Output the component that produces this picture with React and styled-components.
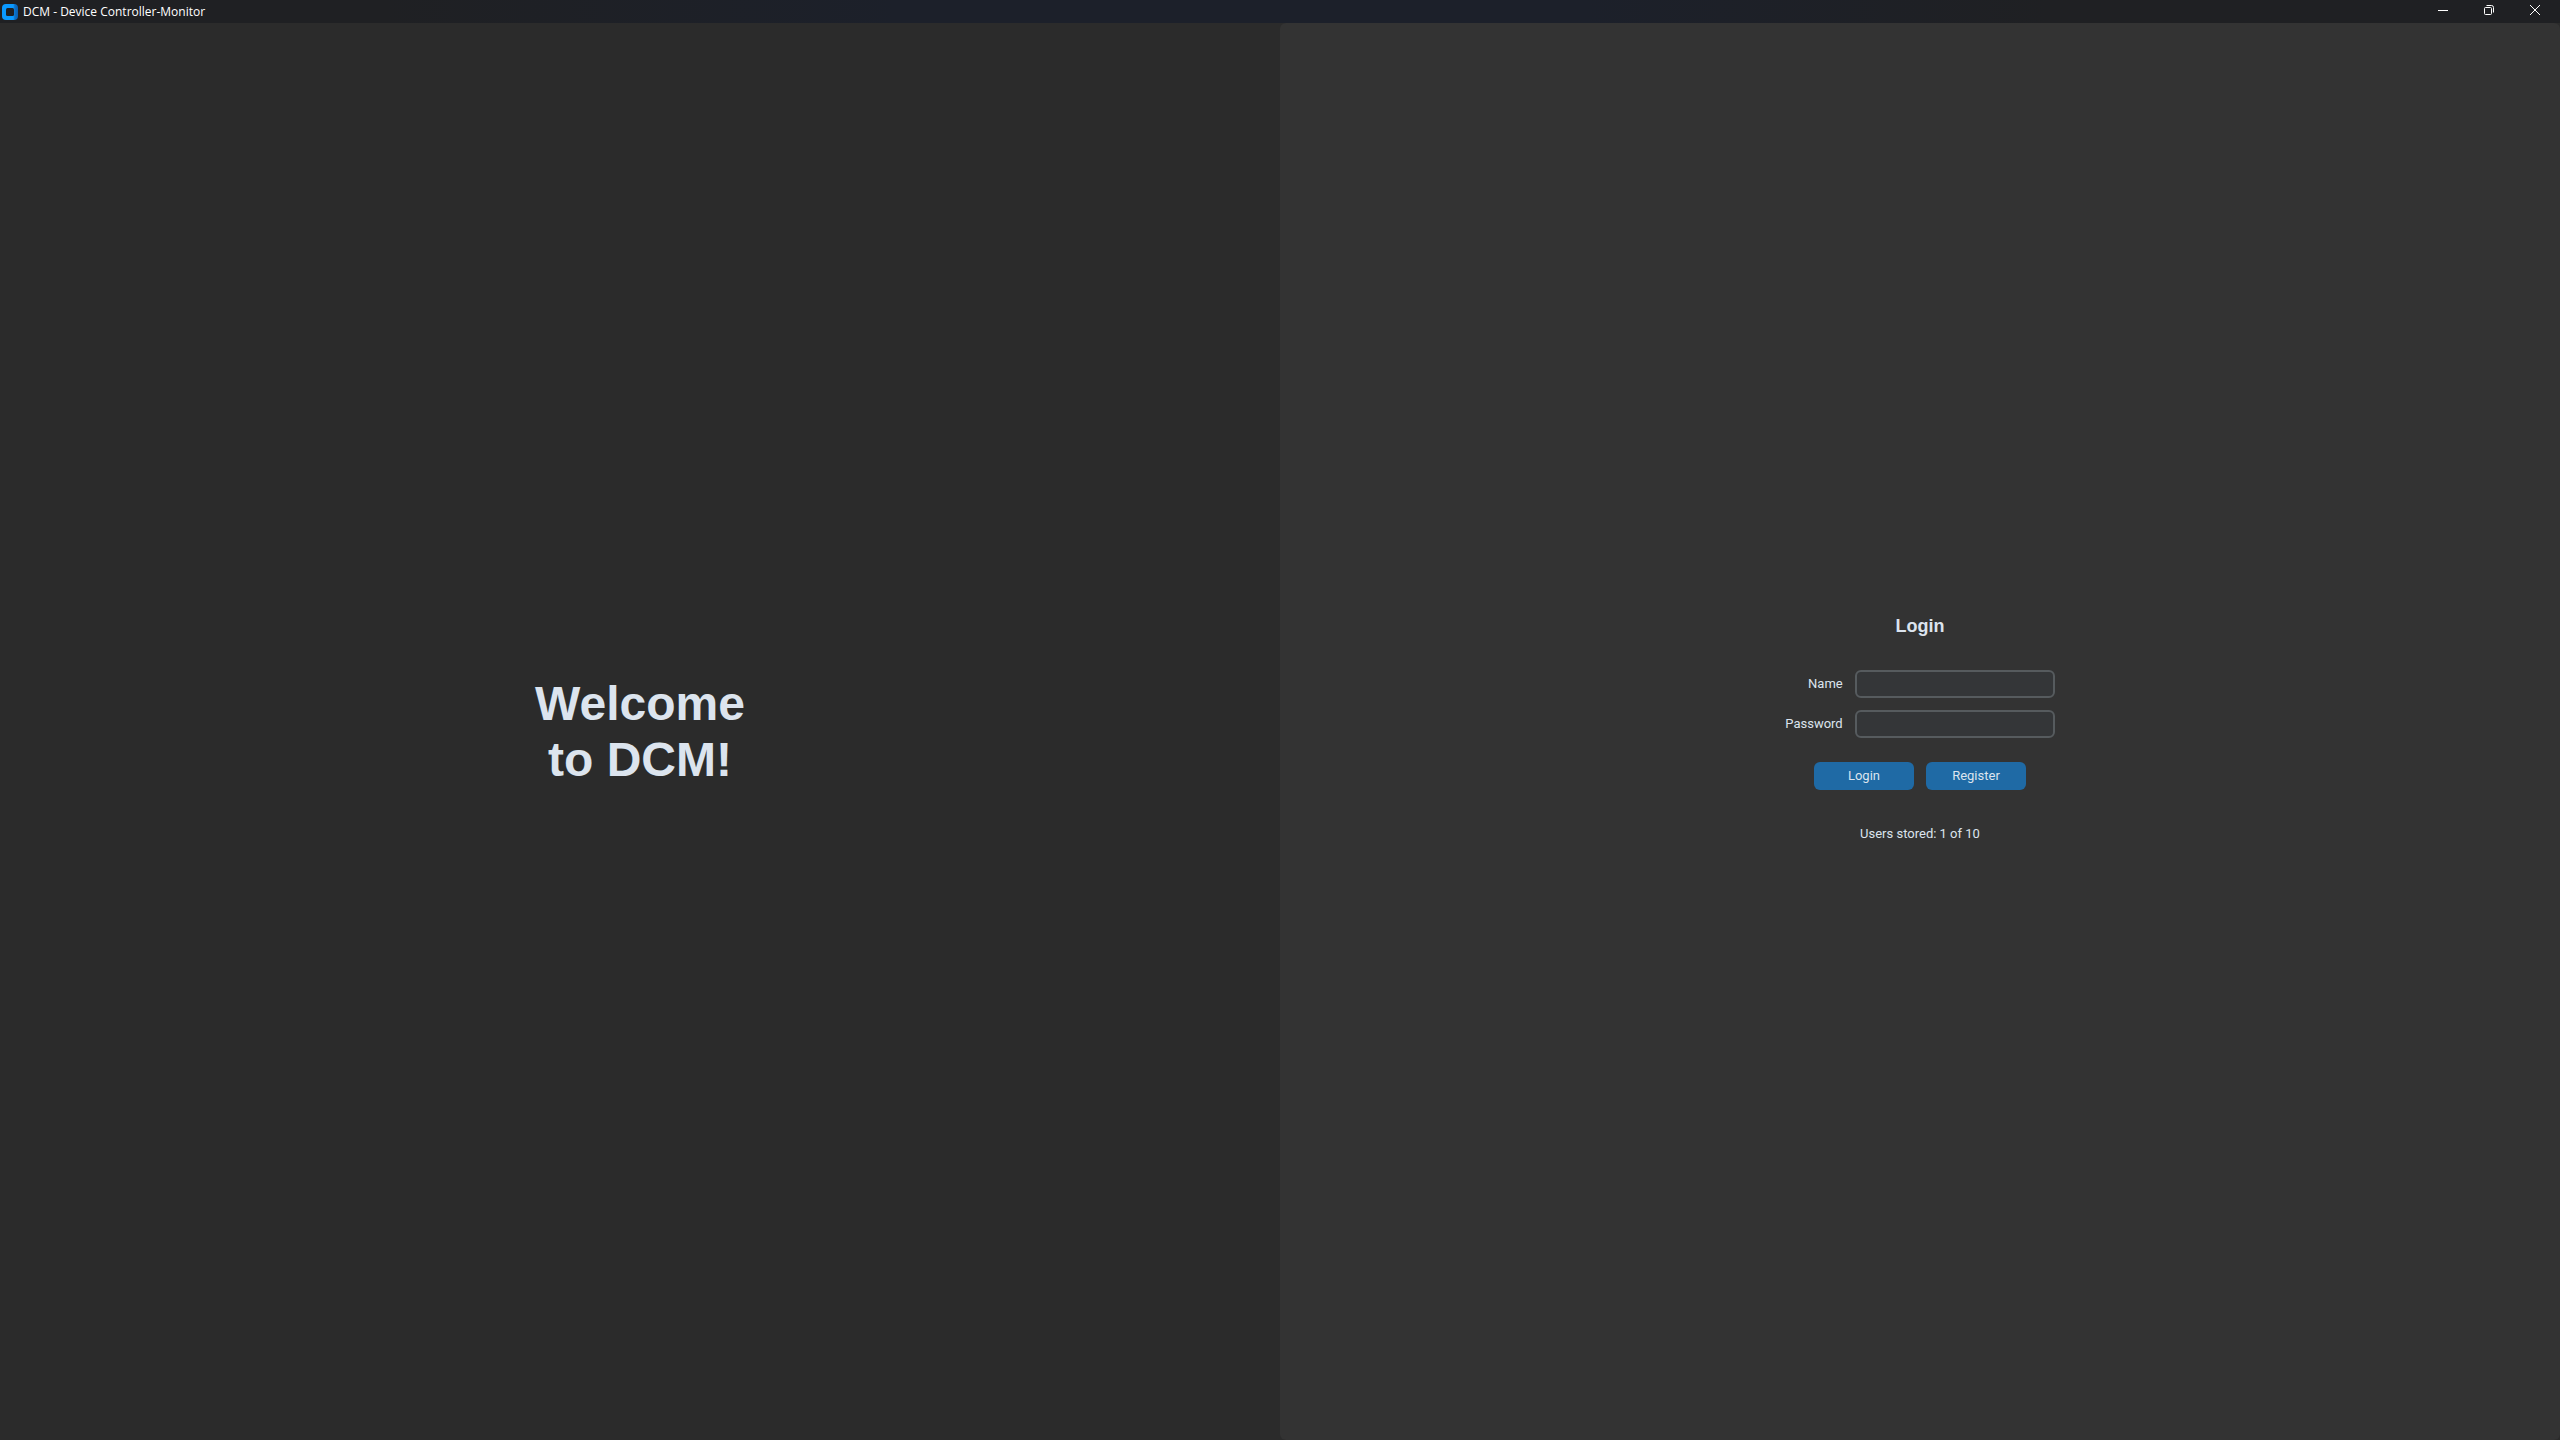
import React from "react";
import styled, { createGlobalStyle } from "styled-components";

const GlobalStyle = createGlobalStyle`
  * { box-sizing: border-box; }
  body { margin: 0; background: #2b2b2b; }
`;

const Window = styled.div`
  display: flex;
  flex-direction: column;
  min-height: 100vh;
  background: #2b2b2b;
  color: #dce4ee;
  font-family: Roboto, "Liberation Sans", sans-serif;
  font-size: 13px;
`;

const TitleBar = styled.header`
  display: flex;
  align-items: center;
  height: 23px;
  padding: 0 2px;
  background: linear-gradient(90deg, #1f2023 15%, #1c202a 35%, #1c202a 62%, #1f2023 80%);
  color: #ffffff;
`;

const AppName = styled.span`
  flex: 1;
  margin-left: 5px;
  font-family: "Segoe UI", "Open Sans", sans-serif;
  font-size: 12px;
  line-height: 23px;
`;

const WindowButton = styled.button`
  display: flex;
  align-items: center;
  justify-content: center;
  width: 46px;
  height: 23px;
  padding: 0 0 3px;
  border: 0;
  background: transparent;
  color: #ffffff;
`;

const Panels = styled.main`
  flex: 1;
  display: grid;
  grid-template-columns: 1fr 1fr;
`;

const WelcomePanel = styled.section`
  display: flex;
  align-items: center;
  justify-content: center;
`;

const Welcome = styled.h1`
  margin: 0;
  font-family: "Liberation Sans", Arial, sans-serif;
  font-size: 48px;
  line-height: 56px;
  text-align: center;
`;

const LoginPanel = styled.section`
  display: flex;
  align-items: center;
  justify-content: center;
  padding-bottom: 3px;
  border-radius: 6px;
  background: #333333;
`;

const Form = styled.form`
  display: flex;
  flex-direction: column;
  align-items: center;
`;

const FormTitle = styled.h2`
  margin: 0 0 30px;
  font-family: "Liberation Sans", Arial, sans-serif;
  font-size: 18px;
  line-height: 28px;
`;

const Fields = styled.div`
  display: grid;
  grid-template-columns: auto 200px;
  gap: 12px;
`;

const FieldLabel = styled.label`
  line-height: 28px;
  text-align: right;
`;

const Field = styled.input`
  width: 100%;
  height: 28px;
  padding: 0 8px;
  border: 2px solid #565b5e;
  border-radius: 6px;
  background: #343638;
  color: inherit;
  font: inherit;
`;

const Actions = styled.div`
  display: flex;
  gap: 12px;
  margin: 24px 0 30px;
`;

const ActionButton = styled.button`
  width: 100px;
  height: 28px;
  padding: 0 0 2px;
  border: 0;
  border-radius: 6px;
  background: #1f6aa5;
  color: inherit;
  font: inherit;
`;

const Status = styled.p`
  margin: 0;
  line-height: 28px;
`;

const Logo = () => (
  <svg width="16" height="16" viewBox="0 0 16 16" aria-hidden="true">
    <defs>
      <linearGradient id="logo-fill" x1="0" x2="1" y1="0" y2="0">
        <stop offset="0.7" stopColor="#0a99ff" />
        <stop offset="0.8" stopColor="#0b70c8" />
        <stop offset="1" stopColor="#0a5fb0" />
      </linearGradient>
    </defs>
    <rect width="16" height="16" rx="4" fill="url(#logo-fill)" />
    <rect x="4" y="4" width="8" height="8" rx="1.5" fill="#1f2023" />
  </svg>
);

const Glyph = ({ children }) => (
  <svg width="12" height="12" viewBox="0 0 12 12" fill="none" stroke="currentColor" aria-hidden="true">
    {children}
  </svg>
);

export default function App() {
  return (
    <>
      <GlobalStyle />
      <Window>
        <TitleBar>
          <Logo />
          <AppName>DCM - Device Controller-Monitor</AppName>
          <WindowButton type="button" aria-label="Minimize">
            <Glyph><path d="M1 6.5h10" /></Glyph>
          </WindowButton>
          <WindowButton type="button" aria-label="Restore">
            <Glyph>
              <rect x="1.5" y="3.5" width="7" height="7" rx="1" />
              <path d="M3.5 1.5h5a2 2 0 0 1 2 2v5" />
            </Glyph>
          </WindowButton>
          <WindowButton type="button" aria-label="Close">
            <Glyph><path d="M1 1l10 10M11 1L1 11" /></Glyph>
          </WindowButton>
        </TitleBar>
        <Panels>
          <WelcomePanel>
            <Welcome>Welcome<br />to DCM!</Welcome>
          </WelcomePanel>
          <LoginPanel>
            <Form onSubmit={(event) => event.preventDefault()}>
              <FormTitle>Login</FormTitle>
              <Fields>
                <FieldLabel htmlFor="name">Name</FieldLabel>
                <Field id="name" type="text" />
                <FieldLabel htmlFor="password">Password</FieldLabel>
                <Field id="password" type="password" />
              </Fields>
              <Actions>
                <ActionButton type="submit">Login</ActionButton>
                <ActionButton type="button">Register</ActionButton>
              </Actions>
              <Status>Users stored: 1 of 10</Status>
            </Form>
          </LoginPanel>
        </Panels>
      </Window>
    </>
  );
}
